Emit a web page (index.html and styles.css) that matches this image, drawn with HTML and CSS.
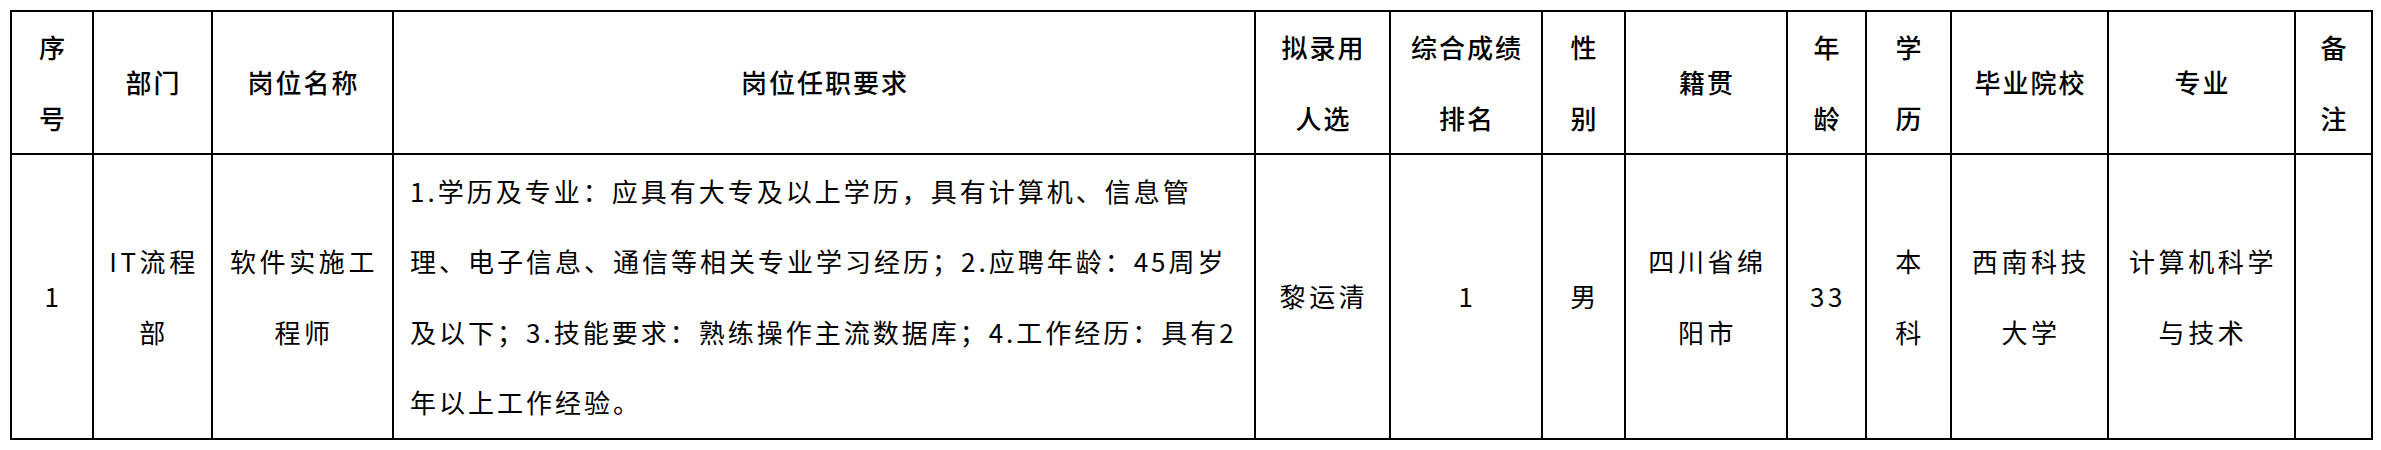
FILE: index.html
```html
<!DOCTYPE html>
<html lang="zh-CN">
<head>
<meta charset="utf-8">
<title>拟录用人选</title>
<link rel="stylesheet" href="styles.css">
</head>
<body>
<table class="sheet">
  <thead>
    <tr class="row-head">
      <th class="hd c-no">序<br>号</th>
      <th class="hd c-dept">部门</th>
      <th class="hd c-post">岗位名称</th>
      <th class="hd c-req">岗位任职要求</th>
      <th class="hd c-name">拟录用<br>人选</th>
      <th class="hd c-rank">综合成绩<br>排名</th>
      <th class="hd c-sex">性<br>别</th>
      <th class="hd c-origin">籍贯</th>
      <th class="hd c-age">年<br>龄</th>
      <th class="hd c-edu">学<br>历</th>
      <th class="hd c-school">毕业院校</th>
      <th class="hd c-major">专业</th>
      <th class="hd c-note">备<br>注</th>
    </tr>
  </thead>
  <tbody>
    <tr class="row-body">
      <td class="cell">1</td>
      <td class="cell">IT流程<br>部</td>
      <td class="cell">软件实施工<br>程师</td>
      <td class="cell desc">
        <div class="line">1.学历及专业：应具有大专及以上学历，具有计算机、信息管</div>
        <div class="line">理、电子信息、通信等相关专业学习经历；2.应聘年龄：45周岁</div>
        <div class="line">及以下；3.技能要求：熟练操作主流数据库；4.工作经历：具有2</div>
        <div class="line">年以上工作经验。</div>
      </td>
      <td class="cell">黎运清</td>
      <td class="cell">1</td>
      <td class="cell">男</td>
      <td class="cell">四川省绵<br>阳市</td>
      <td class="cell">33</td>
      <td class="cell">本<br>科</td>
      <td class="cell">西南科技<br>大学</td>
      <td class="cell">计算机科学<br>与技术</td>
      <td class="cell"></td>
    </tr>
  </tbody>
</table>
</body>
</html>
```

FILE: styles.css
```css
html, body {
  margin: 0;
  padding: 0;
  background: #ffffff;
}

body {
  padding: 10px 0 0 10px;
  font-family: "Noto Sans CJK SC", "Noto Sans", sans-serif;
  color: #000000;
}

.sheet {
  width: 2363px;
  table-layout: fixed;
  border-collapse: separate;
  border-spacing: 0;
  border-left: 2px solid #000;
  border-top: 2px solid #000;
}

.hd,
.cell {
  box-sizing: border-box;
  border-right: 2px solid #000;
  border-bottom: 2px solid #000;
  padding: 0;
  text-align: center;
  vertical-align: middle;
  font-size: 26px;
  line-height: 70.5px;
  white-space: nowrap;
}

.hd {
  font-weight: 500;
  letter-spacing: 2px;
  padding-left: 2px;
}

.cell {
  font-weight: 400;
  letter-spacing: 3.6px;
  padding-left: 3px;
}

.row-head { height: 143px; }
.row-body { height: 285px; }

.c-no { width: 82px; }
.c-dept { width: 119px; }
.c-post { width: 181px; }
.c-req { width: 862px; }
.c-name { width: 135px; }
.c-rank { width: 152px; }
.c-sex { width: 83px; }
.c-origin { width: 162px; }
.c-age { width: 79px; }
.c-edu { width: 85px; }
.c-school { width: 157px; }
.c-major { width: 187px; }
.c-note { width: 77px; }

.desc {
  text-align: left;
  padding-left: 16px;
  letter-spacing: 3px;
}

.line {
  white-space: nowrap;
}
```
